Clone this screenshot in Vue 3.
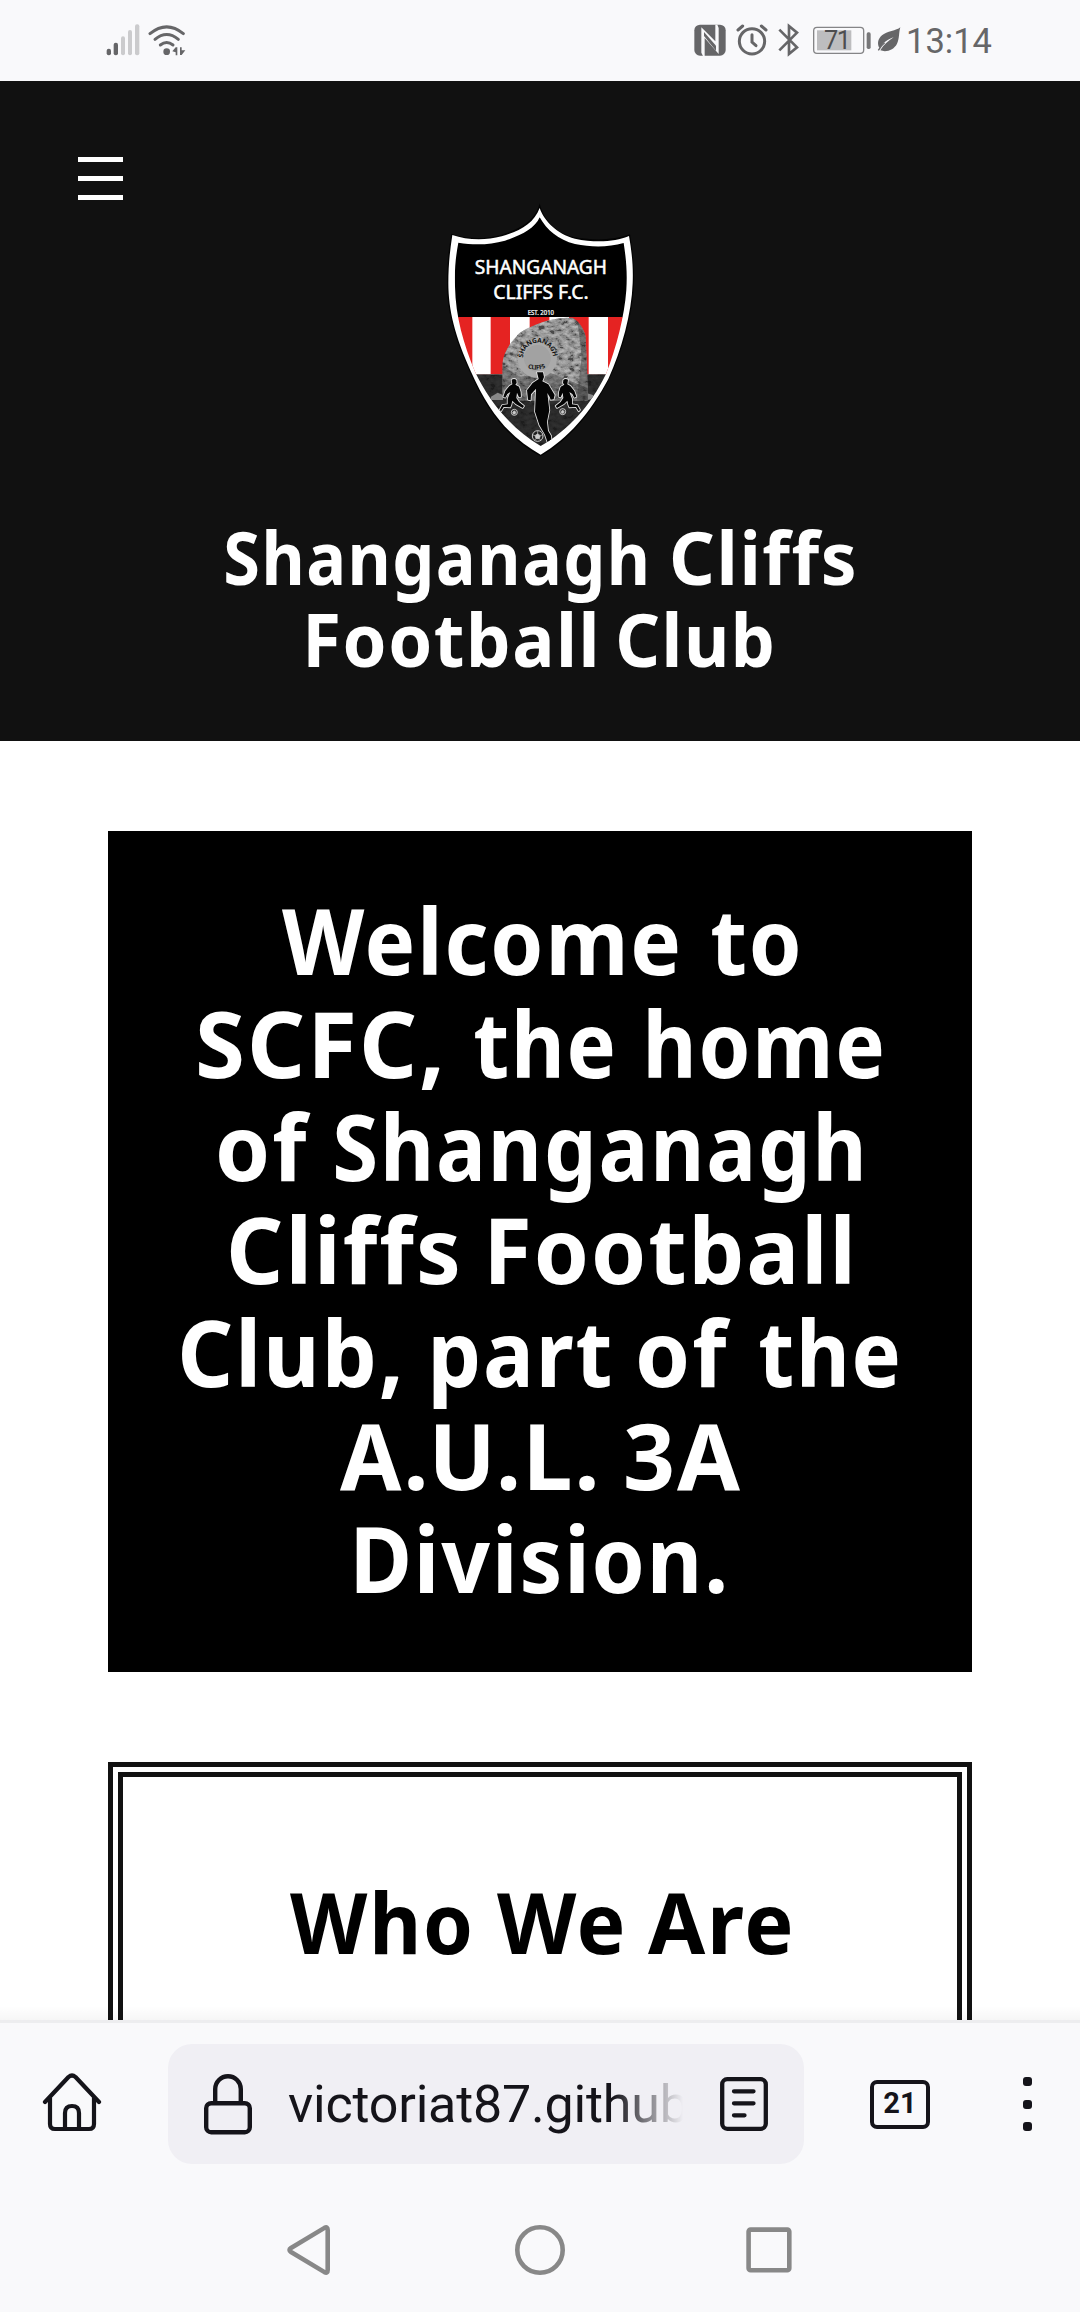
<script setup>
import { ref, onMounted } from 'vue'

// Each word: [text, width, gap before it]
const titleLines = [
  [['Shanganagh', 420, 0], ['Cliffs', 181, 27]],
  [['Football', 287, 0], ['Club', 153, 24]],
]
const welcomeLines = [
  [['Welcome', 396, 0], ['to', 86, 34]],
  [['SCFC,', 241, 0], ['the', 138, 35], ['home', 234, 35]],
  [['of', 92, 0], ['Shanganagh', 525, 25]],
  [['Cliffs', 226, 0], ['Football', 359, 34]],
  [['Club,', 217, 0], ['part', 177, 34], ['of', 92, 29], ['the', 138, 29]],
  [['A.U.L.', 255, 0], ['3A', 114, 31]],
  [['Division.', 368, 0]],
]
const aboutLines = [[['Who', 180, 0], ['We', 125, 27], ['Are', 142, 26]]]

const root = ref(null)

// Condenses each word so that its ink fills the word's width exactly.
onMounted(() => {
  const ctx = document.createElement('canvas').getContext('2d')
  root.value.querySelectorAll('[data-measure]').forEach((el) => {
    const cs = getComputedStyle(el)
    ctx.font = `${cs.fontWeight} ${cs.fontSize} ${cs.fontFamily}`
    const text = el.textContent
    const spacing = parseFloat(cs.fontSize) * 0.022
    const m = ctx.measureText(text)
    const ink = m.actualBoundingBoxRight + m.actualBoundingBoxLeft + spacing * (text.length - 1)
    const scale = Number(el.dataset.measure) / ink
    el.style.letterSpacing = `${spacing}px`
    el.style.transform = `scaleX(${scale}) translateX(${m.actualBoundingBoxLeft}px)`
  })
})
</script>

<template>
  <div ref="root" class="screen">
    <div class="status">
      <svg class="signal" width="34" height="60" viewBox="48 0 102 180">
        <g fill="#666668">
          <rect x="50" y="116" width="13" height="20" rx="6" />
          <rect x="71" y="98" width="13" height="38" rx="6" />
        </g>
        <g fill="#cbcbcd">
          <rect x="93" y="79" width="12" height="57" rx="6" />
          <rect x="114" y="60" width="12" height="76" rx="6" />
          <rect x="135" y="43" width="13" height="93" rx="6" />
        </g>
      </svg>
      <svg width="38" height="60" viewBox="174 0 114 180">
        <g fill="none" stroke="#666668" stroke-width="9" stroke-linecap="round">
          <path d="M180 71Q230 30 280 71" />
          <path d="M195 88Q230 59 265 88" />
          <path d="M211 105Q230 90 249 105" />
        </g>
        <circle cx="230" cy="125" r="10" fill="#666668" />
        <path d="M247 124L257 112H262V136H257V127ZM270 112h5v9h11l-11 14h-5z" fill="#666668" />
      </svg>
      <div class="status-right">
        <svg width="32" height="60" viewBox="42 0 96 180">
          <rect x="43" y="44" width="94" height="93" rx="17" fill="#666668" />
          <path d="M69 138L64 128V52L106 94V44H112L116 54V132L74 84V138Z" fill="#f9f9fb" />
          <path d="M72 66L108 107V122L72 78Z" fill="#666668" />
        </svg>
        <svg width="32" height="60" viewBox="168 0 96 180">
          <g fill="none" stroke="#666668" stroke-width="9" stroke-linecap="round">
            <circle cx="216" cy="94" r="38" />
            <path d="M216 74V96L228 107" />
            <path d="M174 60L188 48M258 60L244 48" />
          </g>
        </svg>
        <svg width="21" height="60" viewBox="294 0 63 180">
          <path d="M298 59L351 112L327 132V48L351 68L298 121" fill="none" stroke="#666668" stroke-width="8" stroke-linejoin="miter" />
        </svg>
        <svg class="battery" width="58" height="60" viewBox="399 0 174 180">
          <rect x="401" y="52" width="150" height="78" rx="10" fill="none" stroke="#858587" stroke-width="4" />
          <rect x="411" y="61" width="103" height="60" fill="#bdbdbf" />
          <rect x="560" y="67" width="12" height="50" rx="5" fill="#777779" />
          <text x="432" y="117" font-size="76" textLength="81" font-family="Roboto, sans-serif" fill="#4d4d4f">71</text>
        </svg>
        <svg class="leaf" width="24" height="60" viewBox="591 0 72 180">
          <path d="M661 52C650 62 620 64 606 76C592 88 592 103 598 114C610 97 624 88 641 82C625 93 611 104 601 121C620 128 642 119 651 101C659 86 656 67 661 52Z" fill="#666668" />
          <path d="M595 121Q603 106 614 98" fill="none" stroke="#666668" stroke-width="4" />
        </svg>
        <span class="clock">13:14</span>
      </div>
    </div>

    <header class="hero">
      <div class="menu"><i></i><i></i><i></i></div>
      <svg class="crest" width="210" height="260" viewBox="0 0 630 780">
        <defs>
          <clipPath id="field">
            <path d="M314 52C335 90 370 120 420 132C470 142 520 142 566 129C574 180 577 220 574 270C568 350 545 440 513 522C465 620 400 690 317 738C235 690 165 610 120 515C85 430 62 350 60 260C58 210 62 170 70 128C120 136 165 134 210 122C260 106 300 85 314 52Z" />
          </clipPath>
          <clipPath id="stone">
            <path d="M202 585V490C206 460 222 432 244 410C254 394 280 383 302 374C335 360 375 352 412 353C432 363 447 387 452 410L456 500L459 602H250Z" />
          </clipPath>
          <filter id="grain" x="0" y="0" width="100%" height="100%">
            <feTurbulence type="fractalNoise" baseFrequency=".055 .085" numOctaves="4" seed="8" />
            <feColorMatrix values="1.6 .8 0 0 -.8  1.6 .8 0 0 -.8  1.6 .8 0 0 -.8  0 0 0 0 1" />
          </filter>
          <path id="arcTop" d="M264 473A45 45 0 0 1 354 473" />
          <path id="arcBottom" d="M278 504Q308 515 336 500" />
          <g id="runner">
            <path d="M-5-51Q3-56 9-50L10-41L6-36L17-30L22-14L23 0L17 2L11-12L9 4L17 16L32 28L28 34L7 22L-3 12L-6 25L-9 32L-29 31L-37 44L-41 40L-33 25L-17 23L-17 6L-9-14L-18-8L-24 3L-30 0L-24-17L-12-32L-3-37Z" />
          </g>
        </defs>
        <path d="M314 10C325 60 365 102 420 112C480 123 540 120 585 103C594 160 598 200 597 250C594 340 564 450 524 535C469 640 404 720 317 769C226 720 161 645 104 515C56 410 36 330 36 250C36 200 40 155 49 101C95 118 150 118 200 104C255 86 300 65 314 10Z" fill="#030303" />
        <path d="M314 24C327 62 365 102 420 116C480 129 540 126 582 108C591 160 595 200 593 250C590 340 560 450 520 537C465 640 400 715 317 764C230 715 165 645 108 515C60 410 40 330 40 250C40 200 44 155 52 105C95 120 150 122 200 109C255 93 297 70 314 24Z" fill="#fff" />
        <g clip-path="url(#field)">
          <rect width="630" height="352" />
          <rect y="351" width="630" height="172" fill="#e52322" />
          <path d="M112 351h55v172h-55zM225 351h59v172h-59zM343 351h59v172h-59zM461 351h58v172h-58z" fill="#fff" />
          <rect y="523" width="630" height="257" fill="#202020" />
          <rect y="523" width="630" height="257" filter="url(#grain)" opacity=".08" />
          <path d="M168 590l20-12 16 7v15h-38zM450 602l6-22 18 5 4 10z" fill="#888" />
          <g clip-path="url(#stone)">
            <rect x="195" y="345" width="275" height="265" fill="#858585" />
            <rect x="195" y="345" width="275" height="265" filter="url(#grain)" opacity=".45" />
            <path d="M425 350L470 350V605H425L440 470L432 400Z" fill="#222" opacity=".4" />
            <path d="M195 490L250 530L350 520L460 565V610H195Z" fill="#333" opacity=".4" />
            <circle cx="307" cy="475" r="59" fill="#aaa" />
            <circle cx="307" cy="475" r="40" fill="#999" opacity=".5" />
          </g>
          <g fill="#111" font-family="'Noto Sans', sans-serif" font-weight="700">
            <text font-size="20"><textPath href="#arcTop" textLength="138">SHANGANAGH</textPath></text>
            <text font-size="18"><textPath href="#arcBottom" textLength="55">CLIFFS</textPath></text>
          </g>
          <g fill="#050505" stroke="#e4e4e4" stroke-width="5" paint-order="stroke" stroke-linejoin="round">
            <use href="#runner" x="235" y="590" />
            <use href="#runner" transform="translate(394 590) scale(-1 1)" />
            <path d="M306 517h18l3 14-5 13 18 9 19 32-3 13-9 1-3-8-7-12 6 52-7 34 3 27 9 15 2 18-12 3-8-24-17-29-13-40 3-69-15 17-1 18-8-2-3-28 17-22 18-12Z" />
          </g>
          <g fill="#202020" stroke="#ccc" stroke-width="3">
            <circle cx="238" cy="637" r="9" /><circle cx="383" cy="635" r="9" /><circle cx="308" cy="708" r="16" />
          </g>
          <path d="M308 701l8 6-3 9h-10l-3-9zM308 692v9M324 704l-8 3M318 722l-5-6M298 722l5-6M292 704l8 3M238 632l5 5-3 5h-5l-2-5zM383 630l5 5-3 5h-5l-2-5z" fill="#ccc" stroke="#ccc" stroke-width="2" />
        </g>
        <g fill="#fff" stroke="#fff" font-family="'Noto Sans', sans-serif">
          <text x="119" y="222" font-size="57" stroke-width="1.5" textLength="397" lengthAdjust="spacingAndGlyphs">SHANGANAGH</text>
          <text x="175" y="297" font-size="57" stroke-width="1.5" textLength="286" lengthAdjust="spacingAndGlyphs">CLIFFS F.C.</text>
          <text x="278" y="345" font-size="19" stroke-width=".7" textLength="79" lengthAdjust="spacingAndGlyphs">EST. 2010</text>
        </g>
      </svg>
      <h1>
        <div v-for="(line, i) in titleLines" :key="i" class="line">
          <span v-for="w in line" :key="w[0]" class="word" :style="{ width: w[1] + 'px', marginLeft: w[2] + 'px' }"><span :data-measure="w[1]">{{ w[0] }}</span></span>
        </div>
      </h1>
    </header>

    <main>
      <section class="welcome">
        <div v-for="(line, i) in welcomeLines" :key="i" class="line">
          <span v-for="w in line" :key="w[0]" class="word" :style="{ width: w[1] + 'px', marginLeft: w[2] + 'px' }"><span :data-measure="w[1]">{{ w[0] }}</span></span>
        </div>
      </section>
      <section class="about">
        <h2>
          <div v-for="(line, i) in aboutLines" :key="i" class="line">
            <span v-for="w in line" :key="w[0]" class="word" :style="{ width: w[1] + 'px', marginLeft: w[2] + 'px' }"><span :data-measure="w[1]">{{ w[0] }}</span></span>
          </div>
        </h2>
      </section>
      <div class="shade"></div>
    </main>

    <footer>
      <div class="toolbar">
        <svg class="home" width="60" height="62" viewBox="0 0 60 62">
          <g fill="none" stroke="#15141a" stroke-width="4.2" stroke-linecap="round" stroke-linejoin="round">
            <path d="M3 30L26.500 5Q30 2 33.500 5L57 30" />
            <path d="M8 26V52Q8 57 13 57H47Q52 57 52 52V26" />
            <path d="M23 57V41Q23 34 30 34T37 41V57" />
          </g>
        </svg>
        <div class="address">
          <svg width="48" height="62" viewBox="0 0 48 62">
            <g fill="none" stroke="#15141a" stroke-width="4.400">
              <rect x="2.200" y="30.200" width="43.600" height="29" rx="5" />
              <path d="M11.200 30V16A12.800 12.800 0 0 1 36.800 16V30" />
            </g>
          </svg>
          <span class="url">victoriat87.github</span>
          <svg width="48" height="54" viewBox="0 0 48 54">
            <g fill="none" stroke="#15141a" stroke-width="4.300" stroke-linecap="round">
              <rect x="2.200" y="2.200" width="43.600" height="49.600" rx="5" />
              <path d="M14 14.300H33.500M14 26.300H33.500M14 38.300H24.500" />
            </g>
          </svg>
        </div>
        <div class="tabs">21</div>
        <div class="more"><i></i><i></i><i></i></div>
      </div>
      <div class="navbar">
        <svg width="506" height="50" viewBox="287 0 506 50">
          <g fill="none" stroke="#888" stroke-width="4.600" stroke-linejoin="round">
            <path d="M324.500 2.900Q327.700 1.300 327.700 5V45Q327.700 48.700 324.500 47.100L291 27Q288 25 291 23Z" />
            <circle cx="540" cy="25" r="22.700" />
            <rect x="748.600" y="4.600" width="40.700" height="40.700" rx="2" />
          </g>
        </svg>
      </div>
    </footer>
  </div>
</template>

<style>
body { margin: 0; background: #fff; }
</style>

<style scoped>
.screen {
  width: 1080px;
  height: 2312px;
  display: flex;
  flex-direction: column;
  overflow: hidden;
  background: #fff;
  font-family: "Noto Sans", "Open Sans", sans-serif;
}
svg { display: block; flex: none; }
.status {
  height: 81px;
  flex: none;
  box-sizing: border-box;
  padding: 10px 90px 0 106px;
  display: flex;
  gap: 8px;
  background: #f9f9fb;
}
.status-right { margin-left: auto; display: flex; gap: 10px; }
.battery { margin-left: 4px; }
.leaf { margin-left: -4px; }
.clock {
  width: 84px;
  margin-left: -5px;
  font: 34.500px/62px Roboto, sans-serif;
  color: #666668;
  white-space: nowrap;
}
.hero {
  height: 660px;
  flex: none;
  box-sizing: border-box;
  padding-top: 75px;
  background: #111;
  color: #fff;
}
.menu {
  width: 45px;
  height: 44px;
  margin-left: 78px;
  display: flex;
  flex-direction: column;
  justify-content: space-between;
}
.menu i { height: 5px; margin-top: 1px; background: #fff; }
.crest { margin: 0 auto 0 435px; }
h1, h2 { margin: 0; font-weight: 700; }
.line { display: flex; justify-content: center; white-space: pre; }
.word { display: block; flex: none; }
.word > span { display: inline-block; vertical-align: top; transform-origin: 0 50%; }
h1 { margin-top: 56px; font-size: 73px; line-height: 82px; }
main {
  position: relative;
  height: 1279px;
  flex: none;
  box-sizing: border-box;
  padding: 90px 108px 0;
  overflow: hidden;
}
.welcome {
  height: 841px;
  box-sizing: border-box;
  padding-top: 58px;
  background: #000;
  color: #fff;
  font-size: 91px;
  font-weight: 700;
  line-height: 103px;
}
.about {
  height: 600px;
  box-sizing: border-box;
  margin-top: 90px;
  padding-top: 96px;
  border: 15px double #111;
  color: #000;
}
h2 { font-size: 85px; line-height: 96px; }
.shade {
  position: absolute;
  left: 0;
  right: 0;
  bottom: 0;
  height: 14px;
  background: linear-gradient(rgba(0, 0, 0, 0), rgba(0, 0, 0, .035));
}
footer {
  flex: 1;
  box-sizing: border-box;
  border-top: 3px solid #ededef;
  background: #f9f9fb;
}
.toolbar {
  height: 162px;
  box-sizing: border-box;
  padding: 0 48px 0 42px;
  display: flex;
  align-items: center;
}
.home { margin-top: -2px; }
.address {
  width: 636px;
  height: 120px;
  box-sizing: border-box;
  margin-left: 66px;
  padding: 0 36px;
  display: flex;
  align-items: center;
  border-radius: 24px;
  background: #f0eff4;
}
.url {
  width: 398px;
  margin: 2px 34px 0 36px;
  flex: none;
  font: 52px/64px Roboto, sans-serif;
  letter-spacing: -.2px;
  color: #15141a;
  -webkit-mask-image: linear-gradient(90deg, #000 325px, transparent 395px);
  mask-image: linear-gradient(90deg, #000 325px, transparent 395px);
}
.tabs {
  width: 60px;
  height: 49px;
  box-sizing: border-box;
  margin-left: 66px;
  border: 4.500px solid #15141a;
  border-radius: 7px;
  font: 700 29px/39px Roboto, sans-serif;
  text-align: center;
  color: #15141a;
}
.more {
  height: 54px;
  margin-left: auto;
  display: flex;
  flex-direction: column;
  justify-content: space-between;
}
.more i { width: 9px; height: 9px; border-radius: 3px; background: #15141a; }
.navbar { padding-top: 40px; display: flex; justify-content: center; }
</style>
